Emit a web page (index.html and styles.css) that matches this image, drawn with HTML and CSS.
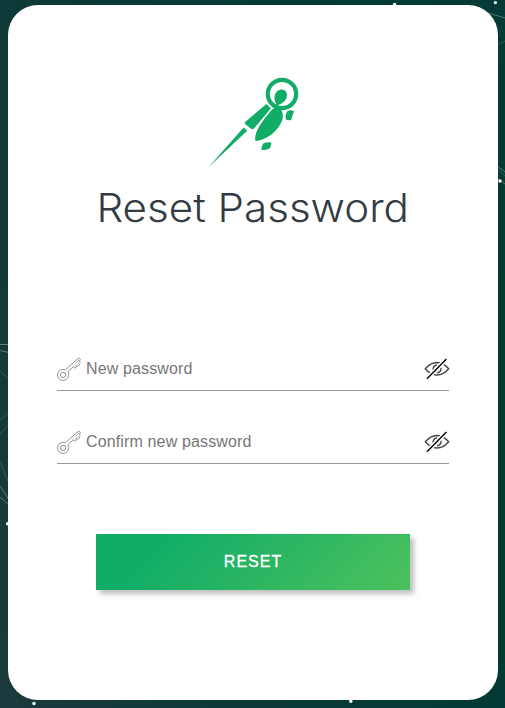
FILE: index.html
```html
<!DOCTYPE html>
<html lang="en">
<head>
<meta charset="utf-8">
<title>Reset Password</title>
<link rel="stylesheet" href="styles.css">
</head>
<body>
<svg class="network" viewBox="0 0 505 708" aria-hidden="true">
  <g fill="none" stroke="#a9c4bd" stroke-width=".7">
    <path d="M0 344.5H9M0 350.5L9 352.5" opacity=".7"/>
    <path d="M0 371L9 379M0 420L9 412M0 434L9 424M0 462L9 484" opacity=".3"/>
    <path d="M0 486L9 500M0 497L9 505M488 13L505 18M497 166L505 172M497 178L505 184" opacity=".65"/>
    <path d="M498 44L505 41M497 169L505 176" opacity=".35"/>
  </g>
  <g fill="#fff">
    <circle cx="394.6" cy="4.5" r="1.7"/><circle cx="495.4" cy="2.6" r="1.6"/>
    <circle cx="500" cy="181" r="1.7"/><circle cx="7.6" cy="523.7" r="1.7"/>
    <circle cx="34" cy="703.5" r="1.7"/><circle cx="350.8" cy="701.3" r="1.7"/>
  </g>
</svg>
<svg class="symbols" aria-hidden="true">
  <symbol id="key" viewBox="0 0 24 24">
    <g fill="none" stroke="#858585" stroke-width=".9" stroke-linejoin="round">
      <path d="M8.3 12.8L20.4 2Q21.7 .8 22.8 1.7L23.4 2.7L22.3 4.2L23.3 5.2L21.8 6.7L22.4 8L20.8 9.2L19.4 8L18.6 8.8L19.5 10L18 11.2L16.2 9.8L11 14.6C13 18 10.8 23.4 6.1 23.4C2.9 23.4.6 21 .6 18C.6 13.9 4.3 11.4 8.3 12.8Z"/>
      <circle cx="6.1" cy="18" r="2.7"/>
      <path d="M18.5 6.2L21.6 3.3"/>
    </g>
  </symbol>
  <symbol id="eye" viewBox="0 0 26 22">
    <g fill="none" stroke="#444" stroke-width="1.4">
      <path d="M1.3 10.7Q6.5 4.7 13 4.5Q19.5 4.7 24.7 10.7Q19.5 16.9 13 17Q6.5 16.9 1.3 10.7Z"/>
      <path d="M13 7Q9 7.3 9.1 12M17 9.5Q17.3 14.3 13.2 15"/>
      <path d="M3 20.7L22.4 1" stroke="#fff" stroke-width="4.2"/>
      <path d="M3 20.7L22.4 1" stroke="#000" stroke-width="1.4"/>
    </g>
  </symbol>
</svg>
<main class="card">
  <svg class="logo" viewBox="0 0 110 105" aria-hidden="true">
    <circle cx="82" cy="24" r="14.2" fill="none" stroke="#11ad67" stroke-width="4.2"/>
    <g fill="#11ad67">
      <path d="M76.5 34.2C73.3 30 74 23 78.2 20.6C81.4 18.6 86 19.4 86.8 23.5C87.8 29 84 33 78.7 34.7L76.8 36.7L72 35Z"/>
      <path d="M71.5 40Q76 35.7 81.2 40.3C85.8 46.6 80.5 57 71.5 64.5Q62 71.2 55.4 71C53.9 64 59 54.5 71.5 40Z"/>
      <path d="M66.3 34L71 38.2L54 58.5Q52.5 59.7 51 58.7L45.2 53.9Q44.2 53 45.4 51.8Z"/>
      <path d="M43.6 57.4L47.2 60.8L8.7 97.1Z"/>
      <path d="M87 41.5Q90.2 39.4 94 41.1Q92.8 44.6 91.3 49.7Q88.9 51 85.6 49.3Q85 44.5 87 41.5Z"/>
      <path d="M63.5 73.3Q67 71.6 71.4 72.4Q71.4 75.4 69.8 78.2Q65.4 80.6 61.4 80Q61.4 75.7 63.5 73.3Z"/>
    </g>
  </svg>
  <h1 class="title">Reset Password</h1>
  <form class="form">
    <label class="field">
      <svg class="key"><use href="#key"/></svg>
      <span class="placeholder">New password</span>
      <svg class="eye"><use href="#eye"/></svg>
    </label>
    <label class="field">
      <svg class="key"><use href="#key"/></svg>
      <span class="placeholder">Confirm new password</span>
      <svg class="eye"><use href="#eye"/></svg>
    </label>
    <button class="reset" type="button">RESET</button>
  </form>
</main>
</body>
</html>
```
FILE: styles.css
```css
* { box-sizing: border-box; }
body {
  margin: 0;
  height: 708px;
  padding: 5px 7px 8px 8px;
  overflow: hidden;
  background: linear-gradient(75deg, #1b3a3c 0%, #0d3a37 30%, #033a33 75%, #053a35 100%);
  font-family: "Liberation Sans", Arial, sans-serif;
}
.network { position: absolute; left: 0; top: 0; width: 505px; height: 708px; }
.symbols { position: absolute; width: 0; height: 0; }
.card {
  position: relative;
  height: 695px;
  padding: 65px 49px 0;
  border-radius: 30px;
  background: #fff;
  display: flex;
  flex-direction: column;
  align-items: center;
}
.logo { width: 110px; height: 105px; margin-left: 4px; flex: none; }
.title {
  margin: 9px 0 0;
  height: 48px;
  color: #333b43;
  font: 300 39px/48px Inter, sans-serif;
  transform: scaleX(1.08);
  white-space: nowrap;
}
.form { width: 100%; margin-top: 121px; display: flex; flex-direction: column; align-items: center; }
.field {
  width: 100%;
  height: 38px;
  margin-bottom: 35px;
  padding-bottom: 5px;
  border-bottom: 1px solid #999;
  display: flex;
  align-items: center;
}
.key { width: 24px; height: 24px; margin-right: 5px; flex: none; }
.placeholder { flex: 1; color: #777; font-size: 16px; line-height: 20px; letter-spacing: .14px; }
.eye { width: 26px; height: 22px; margin-right: -1px; flex: none; }
.reset {
  width: 314px;
  height: 56px;
  margin-top: 35px;
  padding: 0;
  border: 0;
  background: linear-gradient(135deg, #11ad67 0%, #11ad67 20%, #4dc15c 100%);
  box-shadow: 4px 4px 5px rgba(0, 0, 0, .25);
  color: #fff;
  font: 16px/56px "Liberation Sans", Arial, sans-serif;
  letter-spacing: 1px;
  -webkit-text-stroke: .3px #fff;
}
```
